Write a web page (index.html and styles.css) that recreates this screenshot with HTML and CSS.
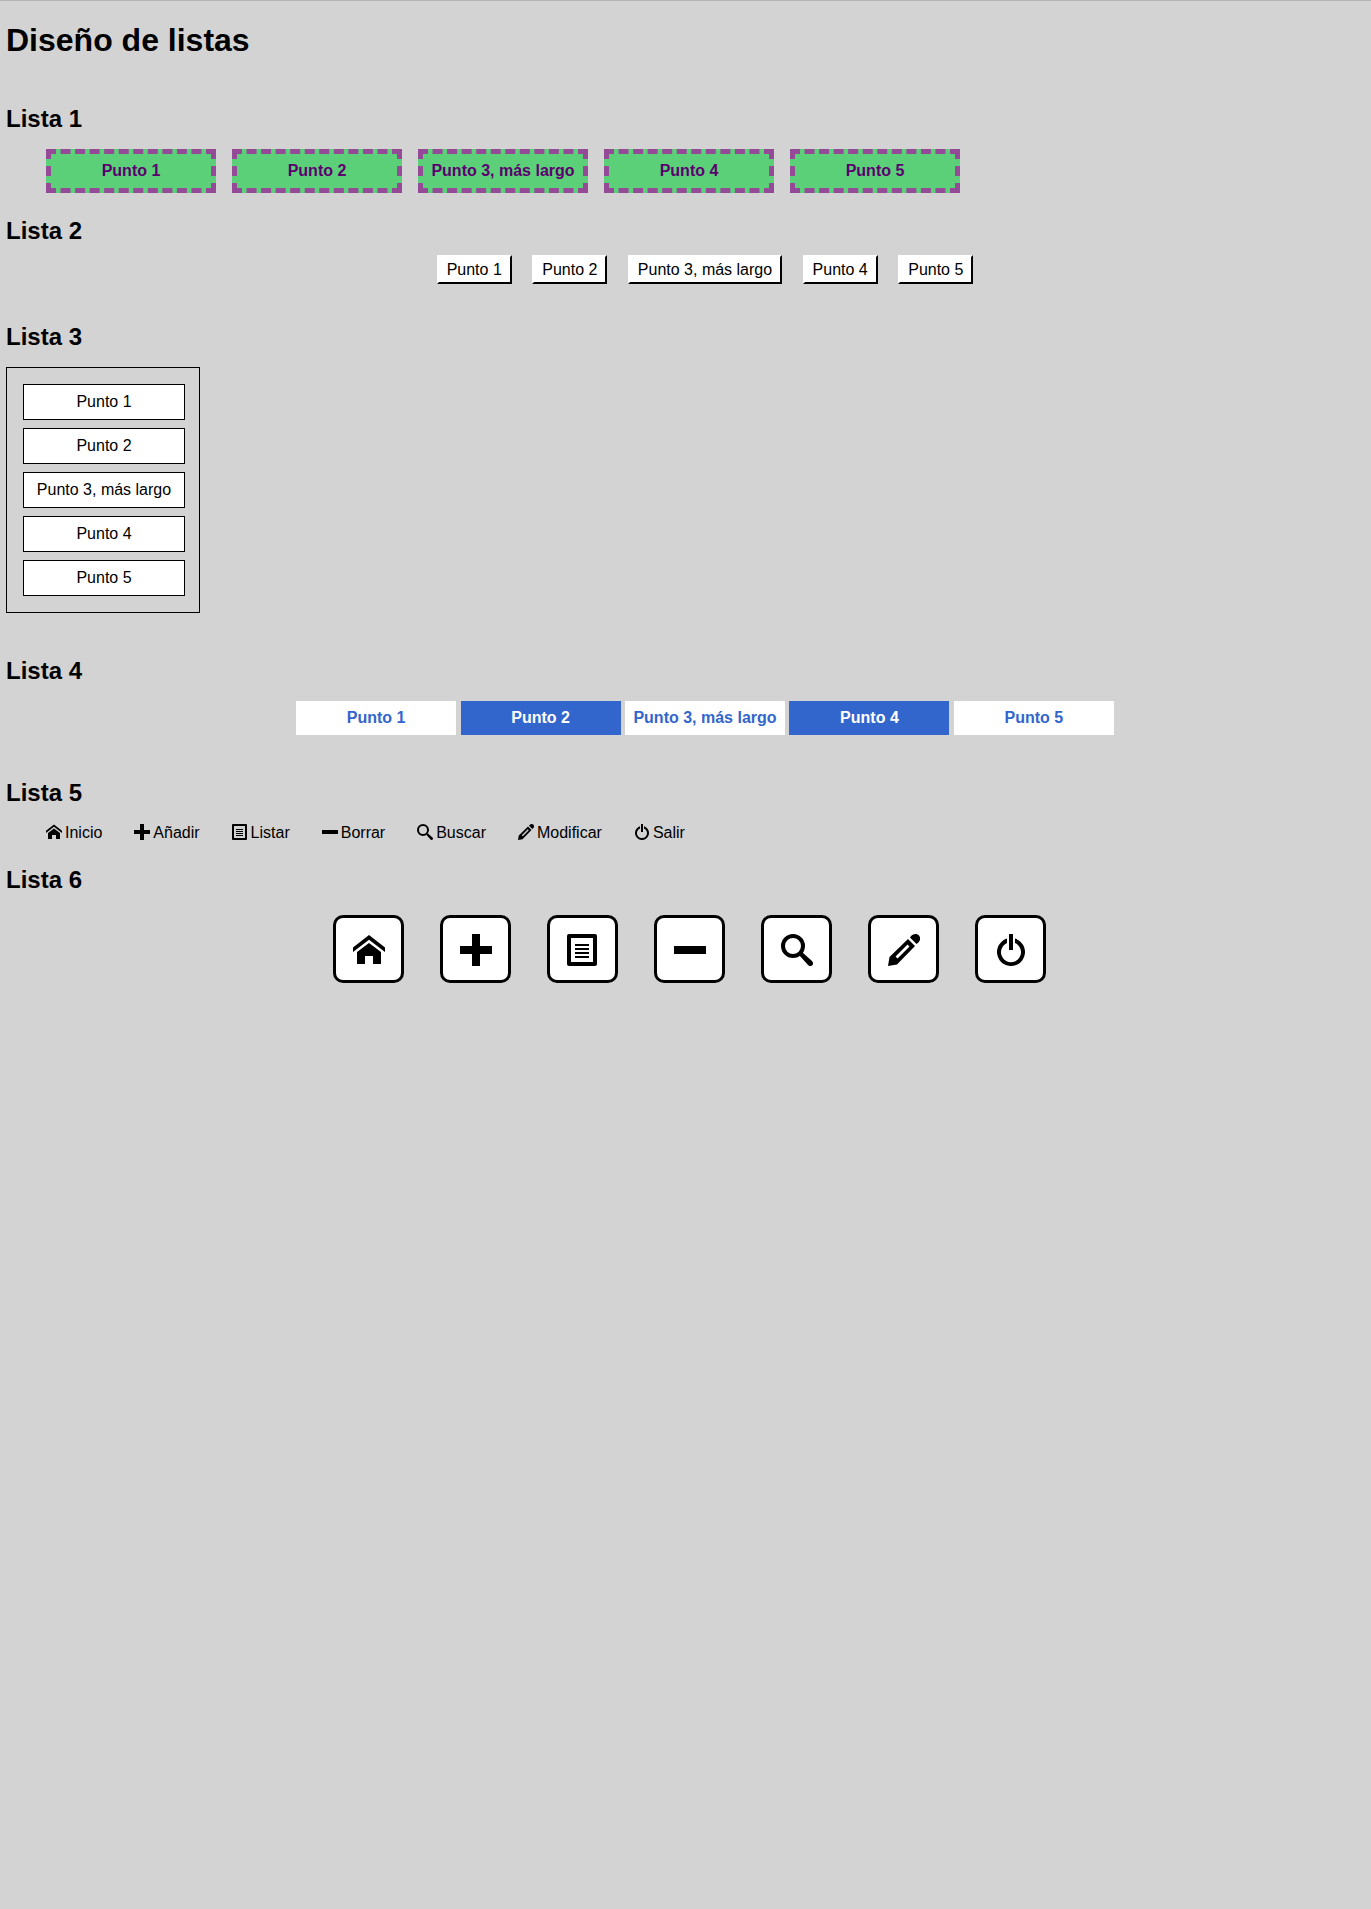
FILE: index.html
```html
<!DOCTYPE html>
<html lang="es">
<head>
<meta charset="utf-8">
<title>Diseño de listas</title>
<link rel="stylesheet" href="styles.css">
</head>
<body>
<svg class="sprite" aria-hidden="true">
  <symbol id="home" viewBox="0 0 32 32"><path d="M16 1 32 13.500V18L16 5.700 0 18V13.500ZM16 9 28 18V30H20V22H12V30H4V18Z"/></symbol>
  <symbol id="add" viewBox="0 0 32 32"><path d="M12 0H20V12H32V20H20V32H12V20H0V12H12Z"/></symbol>
  <symbol id="list" viewBox="0 0 32 32"><path fill-rule="evenodd" d="M2 0H28Q30 0 30 2V30Q30 32 28 32H2Q0 32 0 30V2Q0 0 2 0ZM4 4V28H26V4ZM8 10H22V12H8ZM8 14H22V16H8ZM8 18H22V20H8ZM8 22H22V24H8Z"/></symbol>
  <symbol id="remove" viewBox="0 0 32 32"><path d="M0 12H32V20H0Z"/></symbol>
  <symbol id="search" viewBox="0 0 32 32"><circle cx="12" cy="12" r="10" fill="none" stroke="currentColor" stroke-width="4"/><path d="M18.500 21.500 21.500 18.500 31 27Q33 29.500 31.200 31.200 29.500 33 27 31Z"/></symbol>
  <symbol id="edit" viewBox="0 0 32 32"><path fill-rule="evenodd" d="M0 32 1.500 23 20 5 27 12 9 30.500ZM7.500 22.500 9.500 24.500 21.500 12.500 19.500 10.500ZM22 3.500C25-1 29-.5 31 1.500 33 4 32.500 7.500 28.500 10Z"/></symbol>
  <symbol id="power" viewBox="0 0 32 32"><path d="M14 0H18V16H14ZM12 4.600V9A10 10 0 1 0 20 9V4.600A14 14 0 1 1 12 4.600Z"/></symbol>
</svg>

<h1>Diseño de listas</h1>

<section class="block">
  <h2>Lista 1</h2>
  <ul class="dashed">
    <li>Punto 1</li>
    <li>Punto 2</li>
    <li>Punto 3, más largo</li>
    <li>Punto 4</li>
    <li>Punto 5</li>
  </ul>
</section>

<section class="block">
  <h2>Lista 2</h2>
  <ul class="raised">
    <li>Punto 1</li>
    <li>Punto 2</li>
    <li>Punto 3, más largo</li>
    <li>Punto 4</li>
    <li>Punto 5</li>
  </ul>
</section>

<section class="block">
  <h2>Lista 3</h2>
  <ul class="stacked">
    <li>Punto 1</li>
    <li>Punto 2</li>
    <li>Punto 3, más largo</li>
    <li>Punto 4</li>
    <li>Punto 5</li>
  </ul>
</section>

<section class="block">
  <h2>Lista 4</h2>
  <ul class="striped">
    <li>Punto 1</li>
    <li>Punto 2</li>
    <li>Punto 3, más largo</li>
    <li>Punto 4</li>
    <li>Punto 5</li>
  </ul>
</section>

<section class="block">
  <h2>Lista 5</h2>
  <ul class="menu">
    <li><svg><use href="#home"/></svg>Inicio</li>
    <li><svg><use href="#add"/></svg>Añadir</li>
    <li><svg><use href="#list"/></svg>Listar</li>
    <li><svg><use href="#remove"/></svg>Borrar</li>
    <li><svg><use href="#search"/></svg>Buscar</li>
    <li><svg><use href="#edit"/></svg>Modificar</li>
    <li><svg><use href="#power"/></svg>Salir</li>
  </ul>
</section>

<section class="block">
  <h2>Lista 6</h2>
  <ul class="tiles">
    <li><svg role="img" aria-label="Inicio"><use href="#home"/></svg></li>
    <li><svg role="img" aria-label="Añadir"><use href="#add"/></svg></li>
    <li><svg role="img" aria-label="Listar"><use href="#list"/></svg></li>
    <li><svg role="img" aria-label="Borrar"><use href="#remove"/></svg></li>
    <li><svg role="img" aria-label="Buscar"><use href="#search"/></svg></li>
    <li><svg role="img" aria-label="Modificar"><use href="#edit"/></svg></li>
    <li><svg role="img" aria-label="Salir"><use href="#power"/></svg></li>
  </ul>
</section>
</body>
</html>
```
FILE: styles.css
```css
* { box-sizing: border-box; }

html {
  background: #d3d3d3;
  border-top: 1px solid #b4b4b4;
  min-height: 100%;
}

body {
  margin: 0;
  padding: 21px 7px 0 6px;
  color: #000;
  font: 16px/18px "Liberation Sans", Arial, sans-serif;
}

.sprite { display: none; }

svg { fill: currentColor; }

h1 {
  margin: 0 0 47px;
  font-size: 32px;
  line-height: 36px;
}

h2 {
  margin: 0;
  font-size: 24px;
  line-height: 28px;
}

ul {
  margin: 16px 0 44px;
  padding: 0 0 0 40px;
  list-style: none;
}

/* Lista 1 */
.dashed {
  display: flex;
  gap: 16px;
  margin-bottom: 24px;
}

.dashed li {
  width: 170px;
  padding: 8px 0;
  border: 5px dashed #954a97;
  background: #5bd078;
  color: #5c0070;
  font-weight: bold;
  text-align: center;
  white-space: nowrap;
}

/* Lista 2 */
.raised {
  margin: 10px 0 39px;
  text-align: center;
  line-height: 19px;
}

.raised li {
  display: inline-block;
  vertical-align: top;
  margin: 0 8px;
  padding: 3px 8px;
  border: 2px solid;
  border-color: #fff #000 #000 #fff;
  background: #fff;
}

/* Lista 3 */
.stacked {
  display: flex;
  flex-direction: column;
  gap: 8px;
  width: 194px;
  padding: 16px 14px 16px 16px;
  border: 1px solid #000;
}

.stacked li {
  padding: 8px 0;
  border: 1px solid #000;
  background: #fff;
  text-align: center;
}

/* Lista 4 */
.striped { text-align: center; }

.striped li {
  display: inline-block;
  vertical-align: top;
  width: 160px;
  padding: 8px 0;
  background: #fff;
  color: #3366cc;
  font-weight: bold;
}

.striped li:nth-child(even) {
  background: #3366cc;
  color: #fff;
}

/* Lista 5 */
.menu {
  display: flex;
  gap: 32px;
  margin: 17px 0 24px;
}

.menu li {
  display: flex;
  gap: 3px;
}

.menu svg {
  width: 16px;
  height: 16px;
}

/* Lista 6 */
.tiles {
  display: flex;
  justify-content: center;
  gap: 36px;
  margin: 21px 31px 0 0;
}

.tiles li {
  display: grid;
  place-items: center;
  width: 71px;
  height: 68px;
  padding-top: 2px;
  border: 3px solid #000;
  border-radius: 10px;
  background: #fff;
}

.tiles svg {
  width: 32px;
  height: 32px;
}
```
